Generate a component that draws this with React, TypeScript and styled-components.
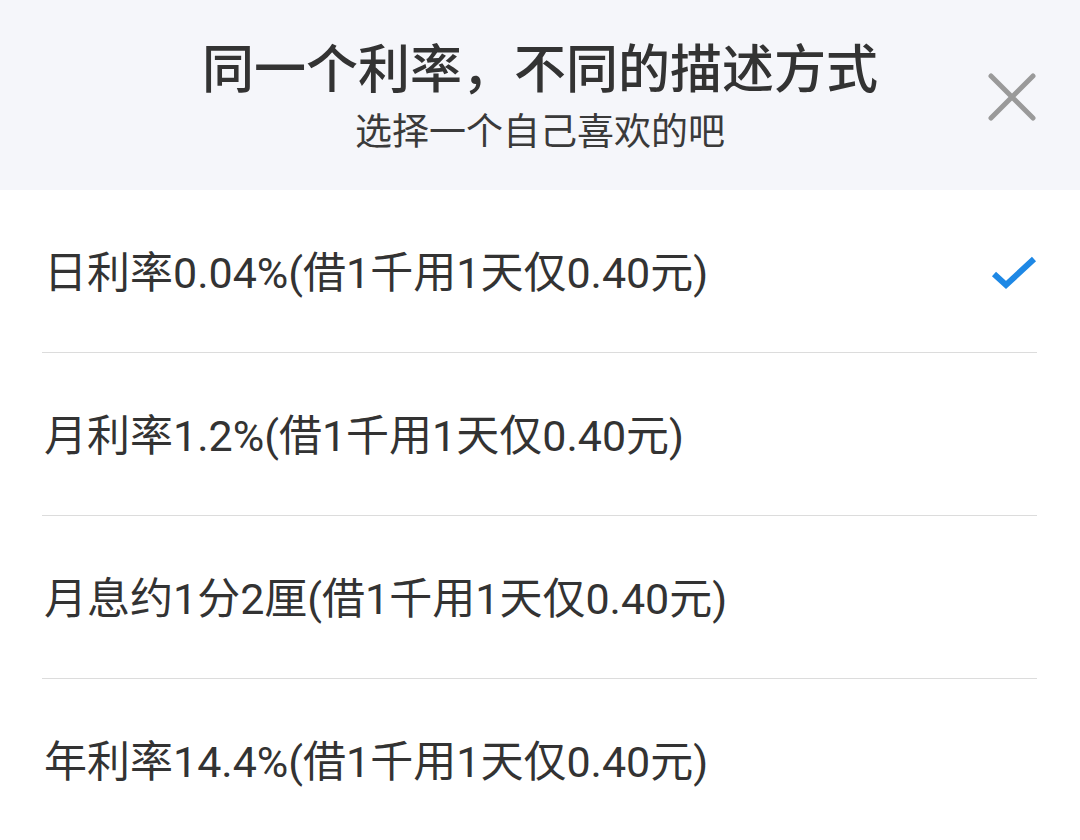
import styled, { createGlobalStyle } from "styled-components";
import { useState } from "react";

const GlobalStyle = createGlobalStyle`
  html, body {
    margin: 0;
    padding: 0;
    background: #ffffff;
    font-family: Roboto, "Noto Sans CJK SC", sans-serif;
  }
`;

const options = [
  "日利率0.04%(借1千用1天仅0.40元)",
  "月利率1.2%(借1千用1天仅0.40元)",
  "月息约1分2厘(借1千用1天仅0.40元)",
  "年利率14.4%(借1千用1天仅0.40元)",
];

const App = () => {
  const [selected, setSelected] = useState(0);

  return (
    <Sheet>
      <GlobalStyle />
      <Header>
        <Title>同一个利率，不同的描述方式</Title>
        <SubTitle>选择一个自己喜欢的吧</SubTitle>
        <CloseButton aria-label="关闭">
          <svg width="48" height="48" viewBox="0 0 48 48">
            <path
              d="M3 3 L45 45 M45 3 L3 45"
              stroke="#9a9a9a"
              strokeWidth="5"
              strokeLinecap="round"
            />
          </svg>
        </CloseButton>
      </Header>
      <List>
        {options.map((text, i) => (
          <Row key={text} $last={i === options.length - 1} onClick={() => setSelected(i)}>
            <RowText>{text}</RowText>
            {selected === i && (
              <svg width="46" height="36" viewBox="0 0 46 36">
                <path
                  d="M3 19 L15 30 L43 4"
                  fill="none"
                  stroke="#1e88e5"
                  strokeWidth="6"
                  strokeLinejoin="miter"
                />
              </svg>
            )}
          </Row>
        ))}
      </List>
    </Sheet>
  );
};

const Sheet = styled.div`
  width: 1080px;
  height: 840px;
  overflow: hidden;
  background: #ffffff;
`;

const Header = styled.div`
  position: relative;
  height: 190px;
  background: #f5f6fa;
  display: flex;
  flex-direction: column;
  align-items: center;
  padding-top: 33px;
  box-sizing: border-box;
`;

const Title = styled.div`
  font-family: "Noto Sans CJK SC", sans-serif;
  font-size: 52px;
  font-weight: 500;
  line-height: 66px;
  color: #333333;
`;

const SubTitle = styled.div`
  font-family: "Noto Sans CJK SC", sans-serif;
  font-size: 37px;
  line-height: 48px;
  color: #3a3a3a;
  margin-top: 6px;
`;

const CloseButton = styled.button`
  position: absolute;
  right: 44px;
  top: 73px;
  border: none;
  background: none;
  padding: 0;
  display: flex;
  cursor: pointer;
`;

const List = styled.div`
  display: flex;
  flex-direction: column;
  padding: 0 43px 0 42px;
`;

const Row = styled.div<{ $last: boolean }>`
  height: 158px;
  display: flex;
  align-items: center;
  justify-content: space-between;
  border-bottom: ${(p) => (p.$last ? "none" : "1px solid #dcdcdc")};
  padding: 4px 0 0 2px;
  box-sizing: content-box;
  cursor: pointer;
`;

const RowText = styled.div`
  font-size: 43px;
  color: #333333;
  line-height: 52px;
`;

export default App;
